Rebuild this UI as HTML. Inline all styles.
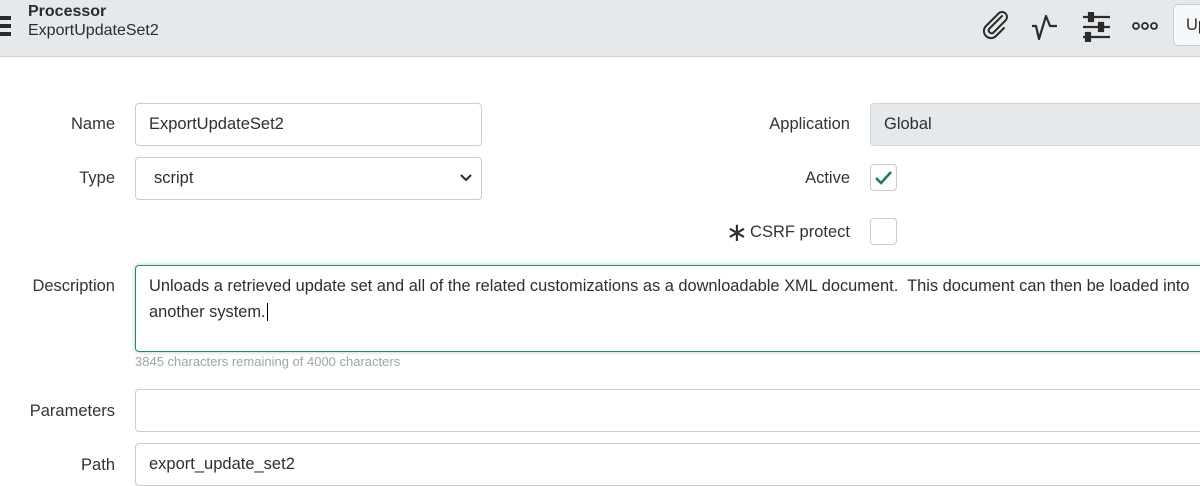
<!DOCTYPE html>
<html><head><style>
body{margin:0;width:1200px;height:484px;overflow:hidden;background:#fff;font-family:"Liberation Sans",sans-serif;color:#2e2e2e;position:relative}
.hdr{position:absolute;left:0;top:0;width:1200px;height:56px;background:#e6e9eb;border-bottom:1px solid #d0d4d7}
.abs{position:absolute}
.lbl{position:absolute;font-size:16.5px;text-align:right;color:#333}
.inp{position:absolute;border:1px solid #c8cdd1;border-radius:4px;background:#fff;box-sizing:border-box;font-size:16.5px;padding-left:13px;line-height:40px}
</style></head><body>
<div class="hdr">
  <div class="abs" style="left:0;top:16px;width:11px;height:4px;background:#2b2b2b"></div>
  <div class="abs" style="left:0;top:24px;width:11px;height:4px;background:#2b2b2b"></div>
  <div class="abs" style="left:0;top:32px;width:11px;height:4px;background:#2b2b2b"></div>
  <div class="abs" style="left:28px;top:3px;font-size:16px;font-weight:bold;color:#2b2b2b">Processor</div>
  <div class="abs" style="left:28px;top:22px;font-size:16px;color:#2b2b2b">ExportUpdateSet2</div>
  <svg class="abs" style="left:980px;top:10px" width="32" height="32" viewBox="0 0 32 32" fill="none" stroke="#2b2b2b" stroke-width="2" stroke-linecap="round"><path d="M22 6 L9 19 a3 3 0 0 0 4 4 L26 10 a5 5 0 0 0 -7 -7 L6 16 a7 7 0 0 0 10 10 L24 18"/></svg>
  <svg class="abs" style="left:1030px;top:12px" width="32" height="30" viewBox="0 0 32 30" fill="none" stroke="#2b2b2b" stroke-width="2.2" stroke-linejoin="round"><path d="M2 14 L6 14 L9 27 L16 4 L20 14 L27 14"/></svg>
  <svg class="abs" style="left:1082px;top:12px" width="30" height="30" viewBox="0 0 30 30" stroke="#2b2b2b" stroke-width="2.2"><path d="M1 5H28M1 15H28M1 25H28"/><rect x="7" y="1" width="4" height="8" fill="#2b2b2b"/><rect x="17" y="11" width="4" height="8" fill="#2b2b2b"/><rect x="4" y="21" width="4" height="8" fill="#2b2b2b"/></svg>
  <svg class="abs" style="left:1131px;top:21px" width="30" height="10" viewBox="0 0 30 10" fill="none" stroke="#2b2b2b" stroke-width="1.8"><circle cx="5" cy="5" r="3"/><circle cx="14" cy="5" r="3"/><circle cx="23" cy="5" r="3"/></svg>
  <div class="abs" style="left:1173px;top:4px;width:40px;height:42px;border:1px solid #c8cdd1;border-radius:5px;background:#f7f8f9;box-sizing:border-box;font-size:16.5px;line-height:40px;padding-left:12px">Up</div>
</div>

<div class="lbl" style="left:0;width:115px;top:115px">Name</div>
<div class="inp" style="left:135px;top:103px;width:347px;height:43px">ExportUpdateSet2</div>
<div class="lbl" style="left:0;width:115px;top:169px">Type</div>
<div class="inp" style="left:135px;top:157px;width:347px;height:43px;padding-left:18px">script</div>
<svg class="abs" style="left:459px;top:173px" width="14" height="10" viewBox="0 0 14 10" fill="none" stroke="#2b2b2b" stroke-width="2"><path d="M2 2L7 7L12 2"/></svg>

<div class="lbl" style="left:700px;width:150px;top:115px">Application</div>
<div class="inp" style="left:870px;top:103px;width:340px;height:43px;background:#e6e9eb;border-color:#d0d4d7">Global</div>
<div class="lbl" style="left:700px;width:150px;top:169px">Active</div>
<div class="abs" style="left:870px;top:164px;width:27px;height:27px;border:1px solid #c8cdd1;border-radius:4px;box-sizing:border-box"></div>
<svg class="abs" style="left:873px;top:168px" width="22" height="20" viewBox="0 0 22 20" fill="none" stroke="#1f7a6b" stroke-width="2.6"><path d="M3 10L8 15L18 4"/></svg>
<div class="lbl" style="left:700px;width:150px;top:223px">CSRF protect</div>
<div class="abs" style="left:726px;top:219px;font-size:26px;line-height:26px">&#x2217;</div>
<div class="abs" style="left:870px;top:218px;width:27px;height:27px;border:1px solid #c8cdd1;border-radius:4px;box-sizing:border-box"></div>

<div class="lbl" style="left:0;width:115px;top:277px">Description</div>
<div class="abs" style="left:135px;top:265px;width:1080px;height:87px;border:1px solid #278576;border-radius:4px;box-sizing:border-box;box-shadow:0 0 4px rgba(39,133,118,.4);font-size:16.4px;line-height:26px;padding:7px 13px;white-space:nowrap">Unloads a retrieved update set and all of the related customizations as a downloadable XML document.&nbsp; This document can then be loaded into<br>another system.<span style="border-left:1px solid #000;margin-left:1px"></span></div>
<div class="abs" style="left:135px;top:354px;font-size:13px;color:#a0a4a7">3845 characters remaining of 4000 characters</div>

<div class="lbl" style="left:0;width:115px;top:402px">Parameters</div>
<div class="inp" style="left:135px;top:389px;width:1080px;height:43px"></div>
<div class="lbl" style="left:0;width:115px;top:456px">Path</div>
<div class="inp" style="left:135px;top:443px;width:1080px;height:43px">export_update_set2</div>
</body></html>
